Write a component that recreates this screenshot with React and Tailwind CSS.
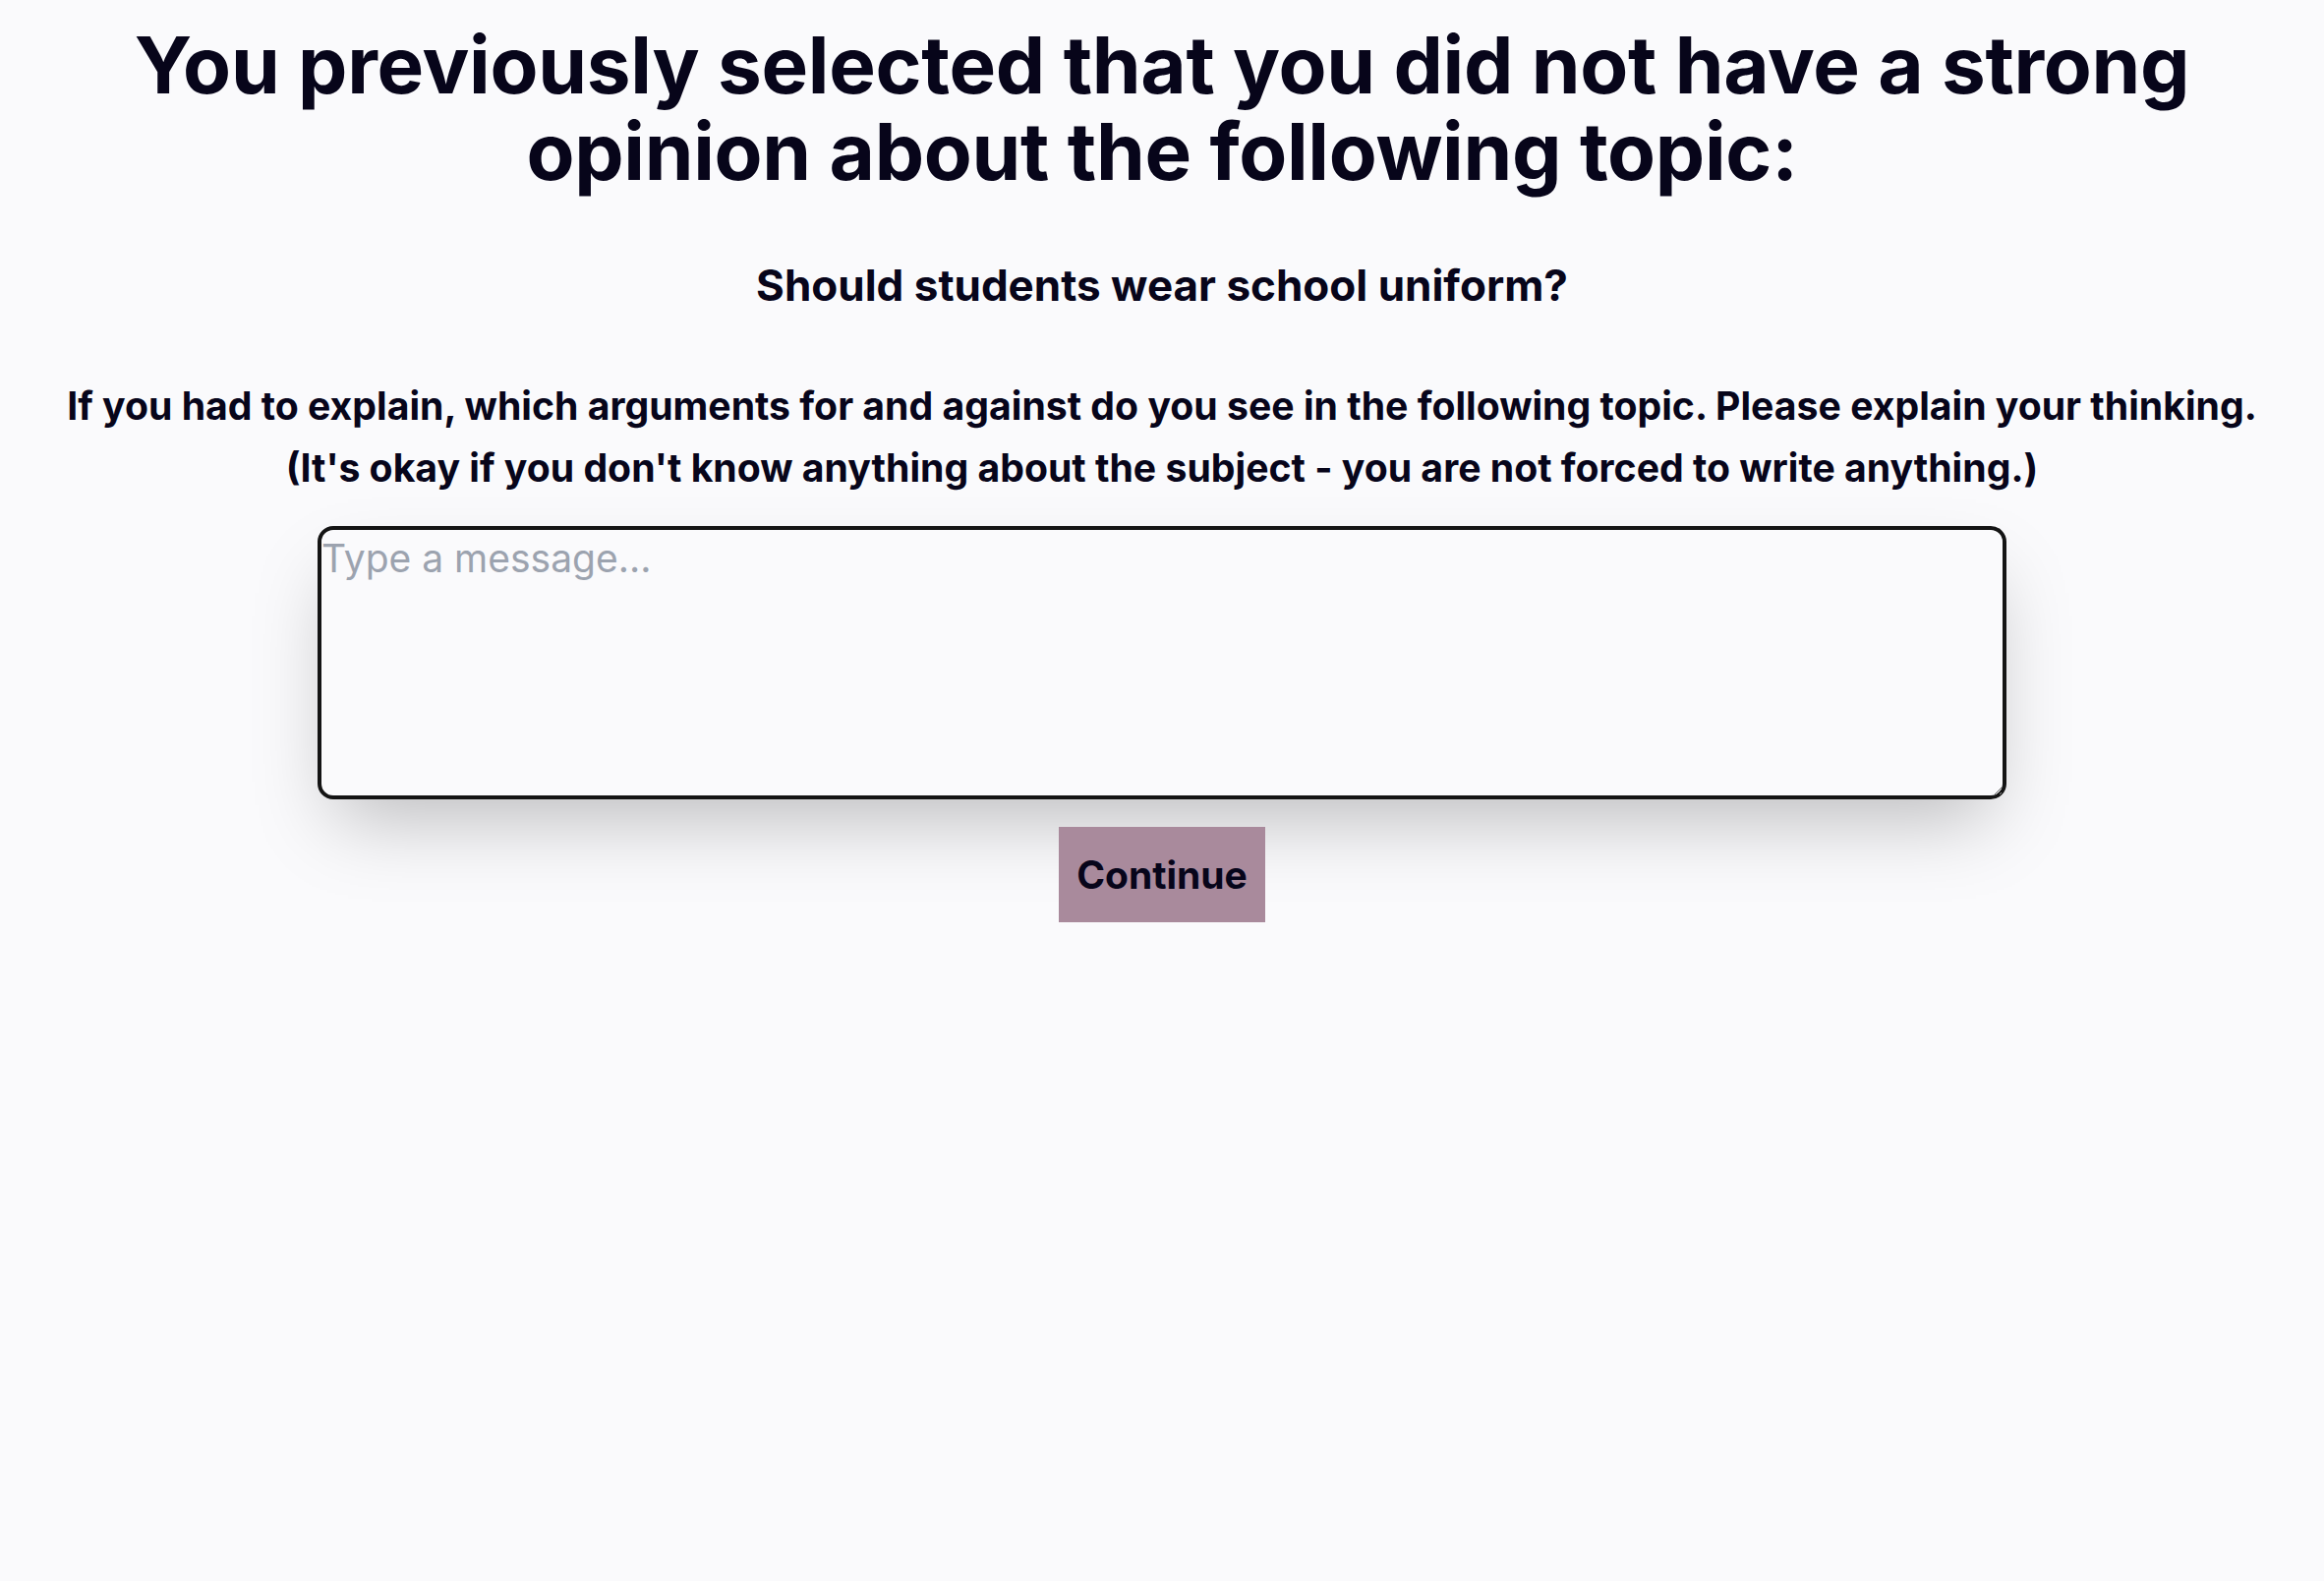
import { useState } from 'react';

function App() {
	const [message, setMessage] = useState('');

	return (
		<div className="min-h-screen bg-[#fafafc] text-[#07051a] font-['Inter',sans-serif]">
			<main className="flex flex-col items-center px-4 pt-[22px] text-center">
				<h1 className="text-[80px] font-bold leading-[88px] tracking-[-0.3px] max-w-[2200px]">
					You previously selected that you did not have a strong
					opinion about the following topic:
				</h1>
				<h2 className="mt-[59px] text-[44px] font-bold leading-[66px]">
					Should students wear school uniform?
				</h2>
				<p className="mt-[58px] text-[39.2px] font-bold leading-[63px]">
					If you had to explain, which arguments for and against do
					you see in the following topic. Please explain your
					thinking.
					<br />
					(It's okay if you don't know anything about the subject -
					you are not forced to write anything.)
				</p>
				<textarea
					value={message}
					onChange={(e) => setMessage(e.target.value)}
					placeholder="Type a message..."
					className="mt-[28px] w-[1718px] h-[278px] border-[4px] border-[#141414] rounded-[16px] pt-[5px] px-0 bg-transparent text-[39px] leading-[48px] text-left resize-y placeholder:text-[#9ca3af] shadow-[0_37px_75px_-18px_rgba(0,0,0,0.25)] outline-none"
				/>
				<button
					type="button"
					className="mt-[28px] h-[97px] px-[18px] bg-[#a98a9c] text-[39px] font-bold leading-[60px]"
				>
					Continue
				</button>
			</main>
		</div>
	);
}

export default App;
